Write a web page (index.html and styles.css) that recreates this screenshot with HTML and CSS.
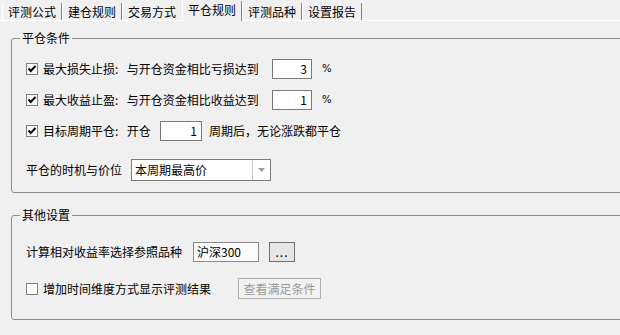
FILE: index.html
```html
<!DOCTYPE html>
<html lang="zh-CN">
<head>
<meta charset="utf-8">
<title>平仓规则</title>
<link rel="stylesheet" href="styles.css">
</head>
<body>
<div class="tabs">
  <span class="tab">评测公式</span>
  <span class="tab">建仓规则</span>
  <span class="tab before-active">交易方式</span>
  <span class="tab active">平仓规则</span>
  <span class="tab">评测品种</span>
  <span class="tab">设置报告</span>
</div>
<div class="panel">
  <fieldset class="group g1">
    <legend>平仓条件</legend>
    <div class="body b1">
      <div class="row">
        <span class="cb"><svg width="10" height="10" viewBox="0 0 10 10"><polyline points="1.5,4.5 3.8,7 8.5,2" fill="none" stroke="#000" stroke-width="2"/></svg></span>
        <span class="label w-long">最大损失止损:&ensp;&thinsp;与开仓资金相比亏损达到</span>
        <span class="num">3</span>
        <span class="pct">%</span>
      </div>
      <div class="row gap">
        <span class="cb"><svg width="10" height="10" viewBox="0 0 10 10"><polyline points="1.5,4.5 3.8,7 8.5,2" fill="none" stroke="#000" stroke-width="2"/></svg></span>
        <span class="label w-long">最大收益止盈:&ensp;&thinsp;与开仓资金相比收益达到</span>
        <span class="num">1</span>
        <span class="pct">%</span>
      </div>
      <div class="row gap">
        <span class="cb"><svg width="10" height="10" viewBox="0 0 10 10"><polyline points="1.5,4.5 3.8,7 8.5,2" fill="none" stroke="#000" stroke-width="2"/></svg></span>
        <span class="label w-open">目标周期平仓:&ensp;&thinsp;开仓</span>
        <span class="num wide">1</span>
        <span class="after">周期后，无论涨跌都平仓</span>
      </div>
      <div class="row sel-row">
        <span class="label w-sel">平仓的时机与价位</span>
        <div class="select">
          <span class="val">本周期最高价</span>
          <span class="arrow"><svg width="7" height="4" viewBox="0 0 7 4"><polygon points="0,0 7,0 3.5,4" fill="#9a9a9a"/></svg></span>
        </div>
      </div>
    </div>
  </fieldset>
  <fieldset class="group g2">
    <legend>其他设置</legend>
    <div class="body b2">
      <div class="row">
        <span class="label w-ref">计算相对收益率选择参照品种</span>
        <span class="ref">沪深300</span>
        <span class="btn dots">...</span>
      </div>
      <div class="row gap2 tall">
        <span class="cb"></span>
        <span class="label w-time">增加时间维度方式显示评测结果</span>
        <span class="btn disabled">查看满足条件</span>
      </div>
    </div>
  </fieldset>
</div>
</body>
</html>
```

FILE: styles.css
```css
html, body {
  margin: 0;
  padding: 0;
}
body {
  width: 620px;
  height: 335px;
  overflow: hidden;
  background: #f0f0f0;
  color: #000;
  font-family: "Noto Sans CJK SC", "Liberation Sans", sans-serif;
  font-size: 12px;
  line-height: 16px;
}

/* tabs */
.tabs {
  display: flex;
  height: 20px;
  padding-left: 2px;
  align-items: flex-start;
}
.tab {
  box-sizing: border-box;
  margin-top: 3px;
  height: 17px;
  padding: 1px 5px 0 5px;
  border-left: 1px solid #ffffff;
  border-right: 1px solid #808080;
  white-space: nowrap;
}
.tab.before-active {
  border-right-color: transparent;
}
.tab.active {
  margin-top: 1px;
  height: 20px;
  padding-top: 1px;
  position: relative;
  z-index: 1;
  background: #f0f0f0;
}

.panel {
  border-top: 1px solid #ffffff;
}

/* group boxes */
.group {
  margin: 0 0 0 11px;
  padding: 0;
  width: 640px;
  box-sizing: border-box;
  border: 1px solid #8e8e8e;
  border-radius: 3px;
  min-width: 0;
}
.g1 { margin-top: 9px; }
.g2 { margin-top: 14px; }
.group legend {
  margin-left: 8px;
  padding: 0 2px;
  line-height: 16px;
  font-size: 12px;
}
.body {
  padding-left: 14px;
}
.b1 { padding-top: 13px; padding-bottom: 11px; }
.b2 { padding-top: 19px; padding-bottom: 20px; }

.row {
  display: flex;
  align-items: center;
  height: 20px;
}
.row.gap { margin-top: 11px; }
.row.sel-row { margin-top: 18px; height: 22px; }
.row.gap2 { margin-top: 16px; }
.row.tall { height: 21px; }

.cb {
  box-sizing: border-box;
  width: 12px;
  height: 12px;
  border: 1px solid #7f7f7f;
  background: #fff;
  margin-right: 5px;
  display: flex;
  align-items: center;
  justify-content: center;
  flex: none;
}
.label {
  white-space: nowrap;
  flex: none;
}
.w-long { width: 229px; }
.w-open { width: 117px; }
.w-sel { width: 105px; }
.w-ref { width: 167px; }
.w-time { width: 195px; }

.num {
  box-sizing: border-box;
  width: 40px;
  height: 20px;
  border: 1px solid #7a7a7a;
  background: #fff;
  text-align: right;
  padding-right: 4px;
  line-height: 18px;
  flex: none;
}
.num.wide { width: 42px; }
.pct {
  margin-left: 10px;
  font-family: "DejaVu Sans", sans-serif;
  font-size: 10px;
}
.after { margin-left: 7px; white-space: nowrap; }

.select {
  box-sizing: border-box;
  width: 140px;
  height: 22px;
  border: 1px solid #7a7a7a;
  background: #fff;
  display: flex;
  flex: none;
}
.select .val {
  flex: 1;
  padding-left: 3px;
  line-height: 20px;
}
.select .arrow {
  width: 17px;
  border-left: 1px solid #c8c8c8;
  display: flex;
  align-items: center;
  justify-content: center;
}

.ref {
  box-sizing: border-box;
  width: 66px;
  height: 20px;
  border: 1px solid #8a8a8a;
  background: #fbfbfb;
  padding-left: 3px;
  line-height: 18px;
  flex: none;
}
.btn {
  box-sizing: border-box;
  height: 20px;
  border: 1px solid #707070;
  background: #e6e6e6;
  display: flex;
  align-items: center;
  justify-content: center;
  flex: none;
}
.btn.dots {
  width: 26px;
  margin-left: 10px;
  line-height: 12px;
  align-items: flex-end;
  padding-bottom: 3px;
  letter-spacing: 1px;
}
.btn.disabled {
  width: 83px;
  height: 21px;
  border-color: #adadad;
  background: #f2f2f2;
  color: #9a9a9a;
}
```
